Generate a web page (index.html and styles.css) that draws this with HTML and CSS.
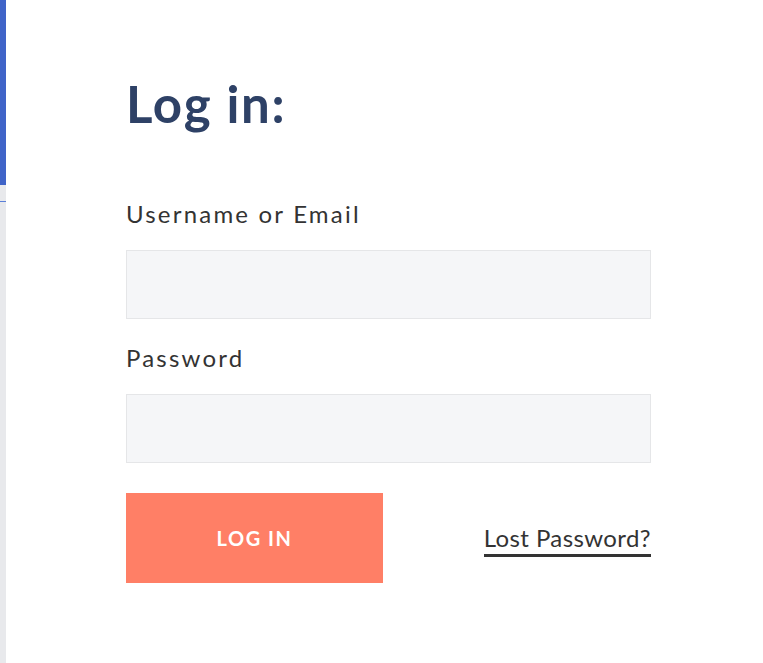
FILE: index.html
```html
<!DOCTYPE html>
<html lang="en">
<head>
  <meta charset="UTF-8">
  <title>Log in</title>
  <link rel="stylesheet" href="styles.css">
</head>
<body>
  <div class="page">
    <!-- strip of the page behind the modal -->
    <div class="behind">
      <div class="behind-top"></div>
      <div class="behind-line"></div>
    </div>

    <div class="modal">
      <h1>Log in:</h1>

      <form class="login-form">
        <label for="user">Username or Email</label>
        <input type="text" id="user">

        <label for="pass">Password</label>
        <input type="password" id="pass">

        <div class="actions">
          <button type="button">LOG IN</button>
          <a href="#" class="lost">Lost Password?</a>
        </div>
      </form>
    </div>
  </div>
</body>
</html>
```

FILE: styles.css
```css
body {
  margin: 0;
  padding: 0;
  font-family: Lato, "Open Sans", sans-serif;
  background-color: #ffffff;
}

.page {
  display: flex;
  height: 663px;
}

.behind {
  width: 6px;
  background-color: #e8e9ec;
  display: flex;
  flex-direction: column;
}

.behind-top {
  height: 185px;
  background-color: #4064c8;
}

.behind-line {
  height: 1px;
  margin-top: 16px;
  background-color: #5b7fd8;
}

.modal {
  flex: 1;
  padding: 72px 0 0 120px;
}

h1 {
  margin: 0 0 64px 0;
  font-size: 51px;
  line-height: 64px;
  font-weight: 700;
  letter-spacing: 1.7px;
  color: #2e4166;
}

.login-form label {
  display: block;
  font-size: 24px;
  line-height: 28px;
  color: #333333;
  letter-spacing: 2.2px;
}

.login-form input {
  display: block;
  box-sizing: border-box;
  width: 525px;
  height: 69px;
  margin: 22px 0 25px 0;
  background-color: #f5f6f8;
  border: 1px solid #e5e6e8;
  border-radius: 0;
  outline: none;
}

.actions {
  display: flex;
  align-items: center;
  justify-content: space-between;
  width: 525px;
  margin-top: 30px;
}

.actions button {
  width: 257px;
  height: 90px;
  border: none;
  border-radius: 0;
  background-color: #ff7f66;
  color: #ffffff;
  font-family: Lato, sans-serif;
  font-size: 20px;
  font-weight: 700;
  letter-spacing: 1.5px;
  cursor: pointer;
}

.lost {
  font-size: 24px;
  line-height: 26px;
  letter-spacing: 0.4px;
  color: #333333;
  text-decoration: none;
  padding-bottom: 3px;
  border-bottom: 3px solid #333333;
  margin-top: 6px;
}
```
